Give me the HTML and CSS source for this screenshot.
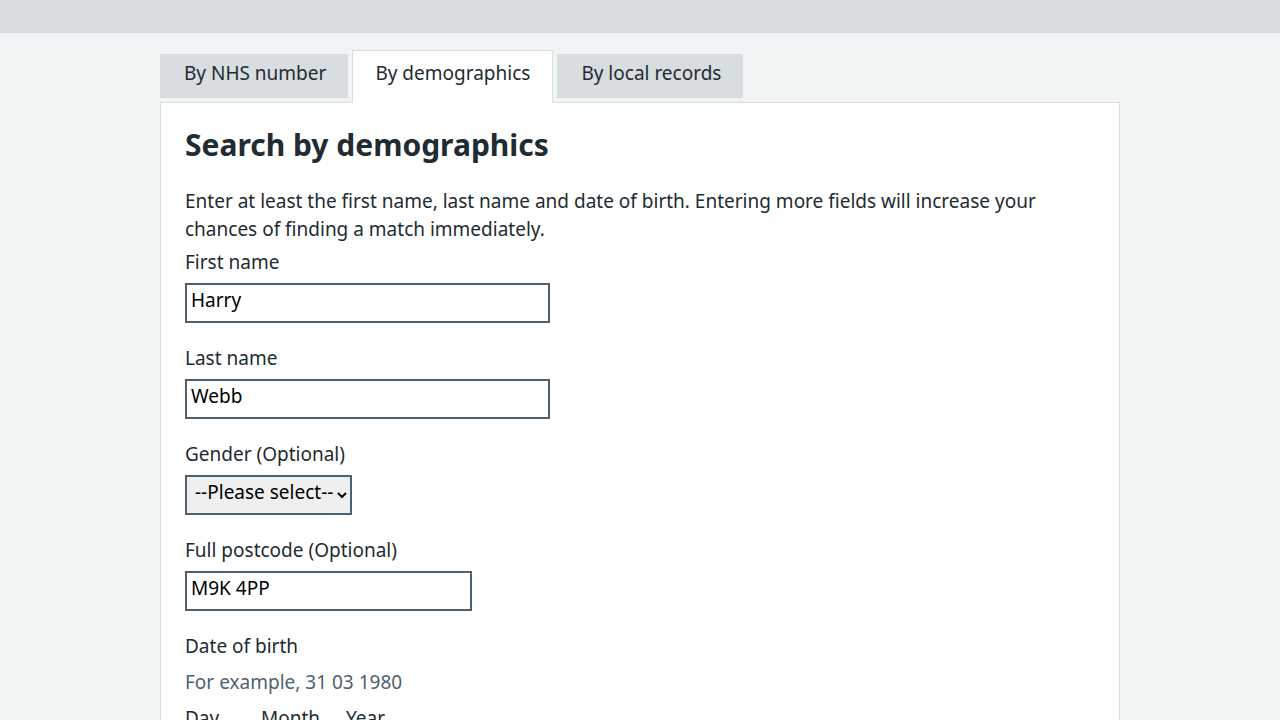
FILE: index.html
```html
<!DOCTYPE html>
<html lang="en">
<head>
<meta charset="utf-8">
<title>Search by demographics</title>
<meta name="viewport" content="width=device-width, initial-scale=1">
<link rel="stylesheet" href="styles.css">
</head>
<body>
<div class="breadcrumb-bar"></div>
<main class="container">
  <nav class="tabs">
    <a class="tab" href="#nhs-number">By NHS number</a>
    <a class="tab tab-selected" href="#demographics" aria-current="page">By demographics</a>
    <a class="tab" href="#local-records">By local records</a>
  </nav>
  <section class="panel" id="demographics">
    <h1 class="heading">Search by demographics</h1>
    <p class="intro">Enter at least the first name, last name and date of birth. Entering more fields will increase your chances of finding a match immediately.</p>
    <form>
      <div class="group">
        <label class="label" for="first-name">First name</label>
        <input class="input width-20" id="first-name" type="text" value="Harry">
      </div>
      <div class="group">
        <label class="label" for="last-name">Last name</label>
        <input class="input width-20" id="last-name" type="text" value="Webb">
      </div>
      <div class="group">
        <label class="label" for="gender">Gender (Optional)</label>
        <select class="input select" id="gender">
          <option>--Please select--</option>
        </select>
      </div>
      <div class="group">
        <label class="label" for="postcode">Full postcode (Optional)</label>
        <input class="input width-10" id="postcode" type="text" value="M9K 4PP">
      </div>
      <fieldset class="fieldset">
        <legend class="legend">Date of birth</legend>
        <div class="hint">For example, 31 03 1980</div>
        <div class="date">
          <div class="date-item"><label class="label" for="day">Day</label><input class="input width-2" id="day" type="text"></div>
          <div class="date-item"><label class="label" for="month">Month</label><input class="input width-3" id="month" type="text"></div>
          <div class="date-item"><label class="label" for="year">Year</label><input class="input width-4" id="year" type="text"></div>
        </div>
      </fieldset>
    </form>
  </section>
</main>
</body>
</html>
```

FILE: styles.css
```css
* { box-sizing: border-box; }

body {
  margin: 0;
  height: 100vh;
  overflow: hidden;
  background: #f0f4f5;
  color: #212b32;
  font-family: "Noto Sans", "Open Sans", sans-serif;
  font-size: 19px;
  line-height: 28px;
}

.breadcrumb-bar {
  height: 33px;
  background: #d8dde0;
}

.container {
  max-width: 960px;
  margin: 0 auto;
  padding-top: 17px;
}

.tabs {
  display: flex;
  align-items: flex-end;
  gap: 4px;
}

.tab {
  margin-bottom: 4px;
  padding: 5px 22px 11px 24px;
  background: #d8dde0;
  color: #212b32;
  text-decoration: none;
}

.tab-selected {
  position: relative;
  margin-bottom: -1px;
  padding: 8px 22px 16px;
  border: 1px solid #d8dde0;
  border-bottom: 0;
  background: #fff;
}

.panel {
  padding: 24px;
  border: 1px solid #d8dde0;
  background: #fff;
}

.heading {
  margin: 0 0 24px;
  font-size: 30px;
  line-height: 36px;
  font-weight: 700;
}

.intro { margin: 0 0 8px; }

.group { margin-bottom: 24px; }

.label {
  display: block;
  padding-bottom: 10px;
  line-height: 22px;
}

.input {
  display: block;
  width: 100%;
  height: 40px;
  padding: 0 4px 6px;
  border: 2px solid #4c6272;
  border-radius: 0;
  background: #fff;
  color: #000;
  font: inherit;
}

.width-20 { max-width: 365px; }
.width-10 { max-width: 287px; }
.width-4 { width: 92px; }
.width-3 { width: 69px; }
.width-2 { width: 60px; }

.select {
  width: auto;
  padding: 0 0 6px 4px;
  background: #efefef;
}

.fieldset {
  margin: 0;
  padding: 0;
  border: 0;
}

.legend {
  padding: 0;
  margin-bottom: 14px;
  line-height: 22px;
}

.hint {
  margin-bottom: 14px;
  color: #4c6272;
  line-height: 22px;
}

.date {
  display: flex;
  gap: 16px;
}
```
